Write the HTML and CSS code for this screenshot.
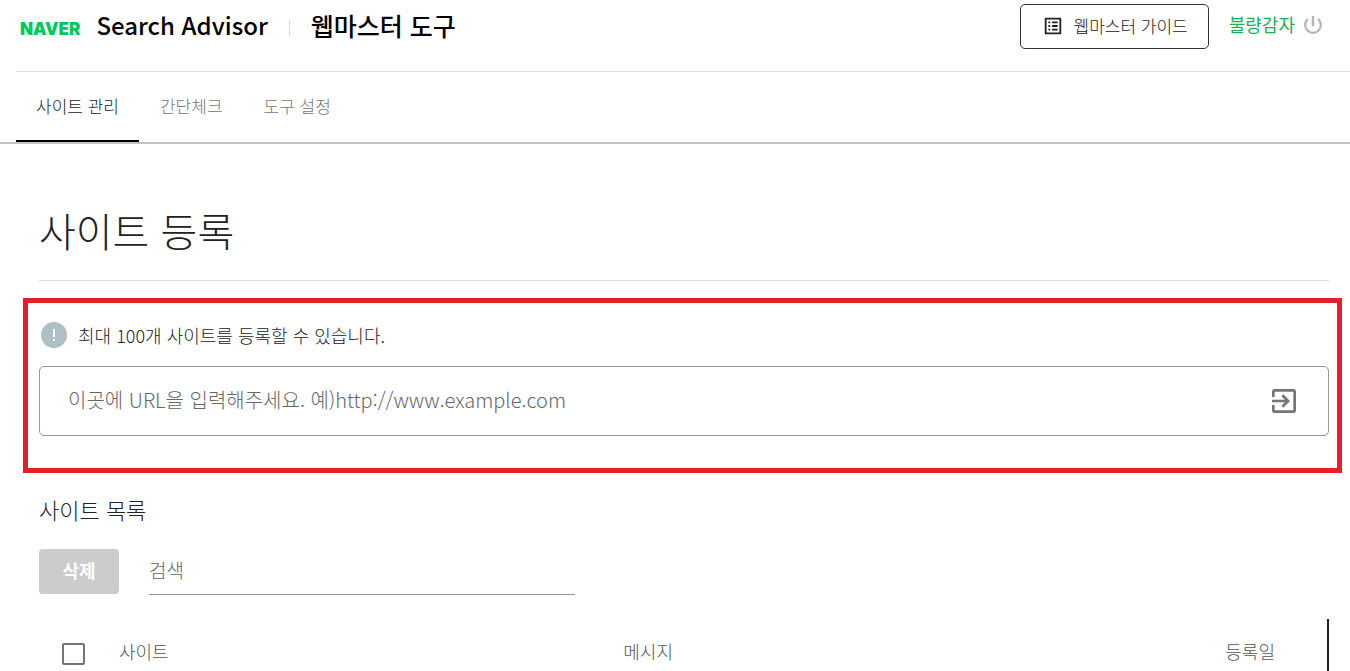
FILE: index.html
```html
<!DOCTYPE html>
<html lang="ko">
<head>
<meta charset="utf-8">
<title>웹마스터 도구</title>
<link rel="stylesheet" href="styles.css">
</head>
<body>
<header class="header">
  <div class="topbar">
    <a class="logo" href="#">NAVER</a>
    <a class="service" href="#">Search Advisor</a>
    <span class="divider"></span>
    <a class="tool" href="#">웹마스터 도구</a>
    <div class="account">
      <button class="guide" type="button">
        <svg width="22" height="22" viewBox="0 0 24 24" fill="currentColor" aria-hidden="true"><path d="M11 7h6v2h-6zm0 4h6v2h-6zm0 4h6v2h-6zM7 7h2v2H7zm0 4h2v2H7zm0 4h2v2H7zM20.1 3H3.9c-.5 0-.9.4-.9.9v16.2c0 .4.4.9.9.9h16.2c.4 0 .9-.5.9-.9V3.9c0-.5-.5-.9-.9-.9zM19 19H5V5h14z"/></svg>
        <span class="guide-text">웹마스터 가이드</span>
      </button>
      <a class="user" href="#">불량감자</a>
      <button class="power" type="button" aria-label="로그아웃">
        <svg width="24" height="24" viewBox="0 0 24 24" fill="currentColor" aria-hidden="true"><path d="M13.200 3h-2.400v10h2.400zm4.630 2.170-1.600 1.600A6.700 6.700 0 0 1 18.700 12a6.700 6.700 0 1 1-10.930-5.230L6.170 5.170A8.930 8.930 0 0 0 3 12a9 9 0 0 0 18 0c0-2.740-1.230-5.180-3.170-6.830z"/></svg>
      </button>
    </div>
  </div>
  <nav class="tabs">
    <a class="tab active" href="#">사이트 관리</a>
    <a class="tab" href="#">간단체크</a>
    <a class="tab" href="#">도구 설정</a>
  </nav>
</header>
<main class="main">
  <h1 class="title">사이트 등록</h1>
  <form class="register">
    <label class="notice" for="url">
      <svg width="26" height="26" viewBox="0 0 26 26" aria-hidden="true"><circle cx="13" cy="13" r="13" fill="#b0bec5"/><path d="M12 7h2v8h-2zm0 10h2v2h-2z" fill="#fff"/></svg>
      최대 100개 사이트를 등록할 수 있습니다.
    </label>
    <div class="url-box">
      <input class="url" id="url" type="text" placeholder="이곳에 URL을 입력해주세요. 예)http://www.example.com">
      <button class="submit" type="submit" aria-label="등록">
        <svg width="32" height="32" viewBox="0 0 24 24" fill="currentColor" aria-hidden="true"><path d="M10.090 15.590 11.500 17l5-5-5-5-1.410 1.410L12.670 11H3v2h9.670zM19 3H5a2 2 0 0 0-2 2v4h2V5h14v14H5v-4H3v4a2 2 0 0 0 2 2h14a2 2 0 0 0 2-2V5a2 2 0 0 0-2-2z"/></svg>
      </button>
    </div>
  </form>
  <section class="sites">
    <h2 class="subtitle">사이트 목록</h2>
    <div class="tools">
      <button class="delete" type="button" disabled>삭제</button>
      <input class="search" type="text" placeholder="검색" aria-label="검색">
    </div>
    <table class="table">
      <thead>
        <tr>
          <th class="col-check"><input class="check" type="checkbox" aria-label="전체 선택"></th>
          <th class="col-site">사이트</th>
          <th class="col-message">메시지</th>
          <th class="col-date">등록일</th>
        </tr>
      </thead>
    </table>
  </section>
</main>
</body>
</html>
```
FILE: styles.css
```css
* { box-sizing: border-box; }
body {
  margin: 0;
  background: #fff;
  color: #222;
  font-family: "Noto Sans CJK KR", sans-serif;
  font-weight: 300;
}
a { color: inherit; text-decoration: none; }
button, input { font: inherit; color: inherit; margin: 0; }
button { padding: 0; border: 0; background: none; }
svg { display: block; flex: none; }

.header { border-bottom: 2px solid #c2c2c2; }
.topbar {
  display: flex;
  align-items: center;
  height: 72px;
  margin-left: 16px;
  padding: 0 24px 18px 4px;
  border-bottom: 1px solid #e0e0e0;
}
.logo {
  padding-top: 4px;
  color: #03c75a;
  font-family: Inter, sans-serif;
  font-size: 17px;
  font-weight: 900;
}
.service, .tool { padding-bottom: 3px; color: #000; line-height: 36px; font-weight: 500; }
.service { margin-left: 16px; font-size: 24px; }
.tool { font-size: 25px; }
.divider { width: 1px; height: 18px; margin: 2px 21px 0; background: #ddd; }
.account { display: flex; align-items: center; margin-left: auto; }
.guide {
  display: flex;
  align-items: center;
  gap: 10px;
  height: 45px;
  padding: 0 20px 0 21px;
  border: 1px solid #333;
  border-radius: 5px;
  font-size: 17px;
}
.guide-text { padding-bottom: 3px; }
.guide svg { margin-bottom: 2px; }
.user { margin-left: 20px; padding-bottom: 6px; color: #19b05a; font-size: 18px; line-height: 28px; font-weight: 400; }
.power { margin: 0 1px 3px 6px; color: #b5b5b5; }

.tabs { display: flex; gap: 1px; height: 70px; padding-left: 16px; }
.tab { padding: 0 20px; color: #777; font-size: 17px; line-height: 68px; }
.tab.active { border-bottom: 2px solid #000; color: #222; }

.main { padding: 56px 8px 0 23px; }
.title {
  margin: 0 13px 17px 16px;
  padding-bottom: 20px;
  border-bottom: 1px solid #ddd;
  font-size: 40px;
  line-height: 60px;
  font-weight: 300;
}
.register { padding: 18px 8px 32px 11px; border: 5px solid #e51f28; }
.notice { display: flex; align-items: center; gap: 11px; margin-left: 2px; font-size: 18px; line-height: 28px; }
.url-box {
  display: flex;
  align-items: center;
  height: 70px;
  margin-top: 17px;
  padding: 0 28px;
  border: 1px solid #999;
  border-radius: 5px;
}
.url { flex: 1; min-width: 0; padding: 0 0 4px; border: 0; outline: 0; background: none; font-size: 20px; }
.submit { color: #757575; }
::placeholder { color: #666; opacity: 1; }

.sites { margin: 20px 13px 0 16px; }
.subtitle { margin: 0; font-size: 22px; line-height: 32px; font-weight: 300; }
.tools { display: flex; gap: 30px; margin-top: 24px; }
.delete {
  width: 80px;
  height: 45px;
  padding-bottom: 3px;
  border-radius: 4px;
  background: #ccc;
  color: #fff;
  font-size: 18px;
  font-weight: 700;
}
.search {
  width: 33%;
  height: 46px;
  padding: 0 0 4px;
  border: 0;
  border-bottom: 1px solid #999;
  outline: 0;
  background: none;
  font-size: 19px;
}
.table {
  width: 100%;
  margin-top: 24px;
  border-collapse: separate;
  border-spacing: 0;
  table-layout: fixed;
  border-right: 2px solid #222;
}
.table th {
  height: 52px;
  padding: 18px 0 6px;
  color: #555;
  font-size: 18px;
  line-height: 28px;
  font-weight: 300;
  text-align: left;
  vertical-align: top;
}
.table .col-check { width: 80px; padding-left: 23px; }
.col-site { width: 39%; }
.table .col-message { padding-left: 2px; }
.table .col-date { padding-right: 52px; text-align: right; }
.check {
  display: block;
  appearance: none;
  width: 23px;
  height: 22px;
  margin-top: 6px;
  border: 2px solid #757575;
  border-radius: 2px;
}
```
